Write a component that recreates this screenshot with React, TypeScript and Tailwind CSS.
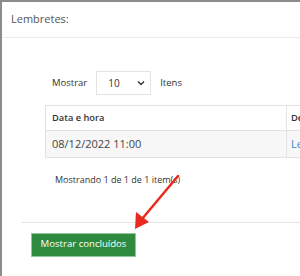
import React from 'react';

const font = { fontFamily: '"Open Sans", "Liberation Sans", sans-serif' };

export default function App() {
  return (
    <div className="relative w-[300px] h-[276px] bg-white overflow-hidden border-t-2 border-l-2 border-[#8c8c8c]" style={font}>
      {/* Header */}
      <div className="h-[36px] flex items-center px-[9px] border-b border-[#ececec]">
        <span className="text-[11px] text-[#555]">Lembretes:</span>
      </div>

      {/* Body */}
      <div className="pl-[43px] pt-[33px]">
        <div className="flex items-center h-[24px]">
          <span className="ml-[7px] text-[9.5px] text-[#333]">Mostrar</span>
          <div className="ml-[9px] w-[55px] h-[24px] border border-[#e3e3e3] flex items-center justify-between pl-[11px] pr-[5px]">
            <span className="text-[10px] text-[#333]">10</span>
            <svg width="8" height="6" viewBox="0 0 8 6">
              <path d="M1 1.5 L4 4.5 L7 1.5" stroke="#333" strokeWidth="1.4" fill="none" />
            </svg>
          </div>
          <span className="ml-[9px] text-[9.5px] text-[#333]">Itens</span>
        </div>

        <table className="mt-[10px] border-collapse table-fixed w-[300px]">
          <colgroup>
            <col className="w-[241px]" />
            <col />
          </colgroup>
          <thead>
            <tr className="h-[25px]">
              <th className="border border-[#e3e3e3] text-left pl-[6px] text-[9.3px] font-semibold text-[#333]">Data e hora</th>
              <th className="border border-[#e3e3e3] text-left pl-[4px] text-[9.3px] font-semibold text-[#333] whitespace-nowrap">Descrição</th>
            </tr>
          </thead>
          <tbody>
            <tr className="h-[27px] bg-[#f7f7f7]">
              <td className="border border-[#e3e3e3] pl-[6px] text-[11px] text-[#444]">08/12/2022 11:00</td>
              <td className="border border-[#e3e3e3] pl-[4px] text-[11px] text-[#3a87c8] whitespace-nowrap">Lembrete</td>
            </tr>
          </tbody>
        </table>

        <div className="mt-[15px] ml-[10px] text-[9px] text-[#333]">Mostrando 1 de 1 de 1 item(s)</div>
      </div>

      <div className="ml-[19px] mt-[35px] border-t border-[#e5e5e5]">
        <button className="mt-[10px] ml-[10px] h-[24px] w-[105px] bg-[#2e8a3f] text-white text-[9.6px] border border-[#8fc89a]">
          Mostrar concluídos
        </button>
      </div>

      {/* Red arrow */}
      <svg className="absolute left-0 top-0 pointer-events-none" width="300" height="276" viewBox="0 0 300 276">
        <line x1="176" y1="174" x2="140" y2="217" stroke="#ea2a1f" strokeWidth="2.5" strokeLinecap="round" />
        <polygon points="133,227 134,210 147,220" fill="#ea2a1f" />
      </svg>
    </div>
  );
}
